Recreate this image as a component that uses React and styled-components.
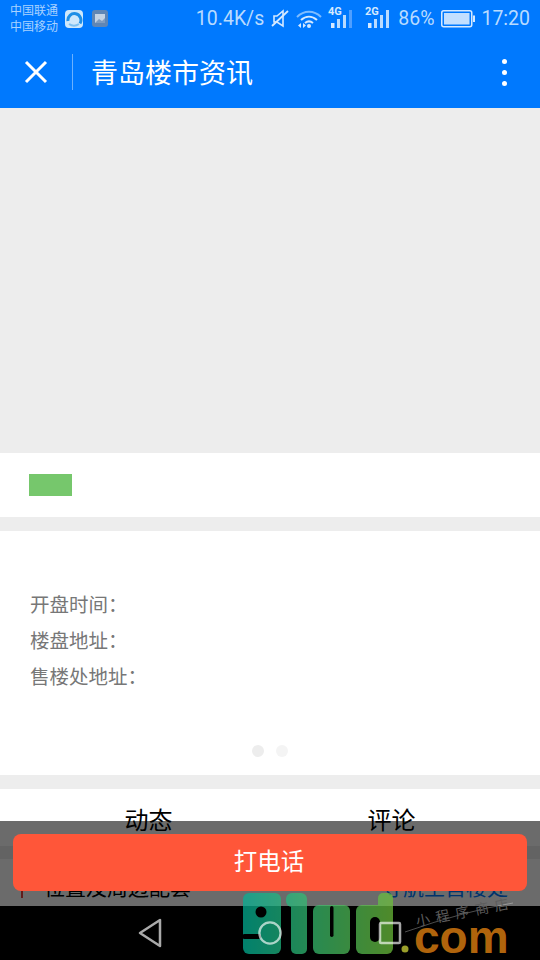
import React from 'react';
import styled, { createGlobalStyle } from 'styled-components';

const GlobalStyle = createGlobalStyle`
  html, body {
    margin: 0;
    padding: 0;
    background: #000;
  }
  * {
    box-sizing: border-box;
  }
`;

const cjk = `"Noto Sans CJK SC", "Noto Sans", sans-serif`;

const Screen = styled.div`
  position: relative;
  display: flex;
  flex-direction: column;
  width: 540px;
  height: 960px;
  overflow: hidden;
  background: #ededed;
  font-family: ${cjk};
`;

const Header = styled.header`
  flex: none;
  height: 108px;
  background: #0079fe;
  color: #fff;
`;

const StatusBar = styled.div`
  display: flex;
  align-items: center;
  justify-content: space-between;
  height: 37px;
  padding: 0 10px;
  color: #b9dbff;
  font-family: Roboto, ${cjk};
`;

const StatusGroup = styled.div`
  display: flex;
  align-items: center;
`;

const Carriers = styled.div`
  width: 55px;
  font-size: 12px;
  line-height: 16px;
  color: #a9d2ff;
`;

const AppTile = styled.svg`
  display: block;
  margin-right: ${(props) => props.$gap || 0}px;
`;

const StatusText = styled.span`
  font-size: 19.5px;
  line-height: 37px;
  margin-right: ${(props) => props.$gap || 0}px;
  white-space: nowrap;
`;

const StatusIcon = styled.svg`
  display: block;
  margin-right: ${(props) => props.$gap || 0}px;
`;

const AppBar = styled.div`
  display: flex;
  align-items: center;
  height: 71px;
  padding: 0 24px 1px;
`;

const CloseIcon = styled.svg`
  display: block;
  margin-right: 24px;
`;

const Divider = styled.div`
  width: 1px;
  height: 36px;
  margin-right: 18px;
  background: rgba(255, 255, 255, 0.42);
`;

const Title = styled.h1`
  flex: 1;
  margin: 0;
  font-size: 27px;
  font-weight: 400;
  line-height: 36px;
  color: #fff;
`;

const MoreButton = styled.div`
  display: flex;
  flex-direction: column;
  gap: 6px;
  margin-right: 9px;
`;

const MoreDot = styled.span`
  width: 5px;
  height: 5px;
  border-radius: 50%;
  background: #fff;
`;

const Main = styled.main`
  position: relative;
  flex: 1;
  display: flex;
  flex-direction: column;
  gap: 14px;
  overflow: hidden;
`;

const Banner = styled.div`
  flex: none;
  height: 345px;
  margin-bottom: -14px;
  background: #ededed;
`;

const TagSection = styled.section`
  flex: none;
  height: 64px;
  padding: 21px 29px;
  background: #fff;
`;

const GreenTag = styled.div`
  width: 43px;
  height: 22px;
  background: #76c76c;
`;

const Swiper = styled.section`
  flex: none;
  display: flex;
  flex-direction: column;
  height: 244px;
  padding: 55px 30px 18px;
  background: #fff;
`;

const InfoLine = styled.div`
  font-size: 19.5px;
  line-height: 36px;
  color: #777;
`;

const Dots = styled.div`
  display: flex;
  justify-content: center;
  gap: 12px;
  margin-top: auto;
`;

const Dot = styled.span`
  width: 12px;
  height: 12px;
  border-radius: 50%;
  background: ${(props) => (props.$active ? '#ededed' : '#f4f4f4')};
`;

const Tabs = styled.div`
  flex: none;
  display: grid;
  grid-template-columns: 243px 243px;
  height: 57px;
  padding: 12px 27px 0;
  background: #fff;
`;

const Tab = styled.div`
  font-size: 24px;
  line-height: 36px;
  text-align: center;
  color: #000;
`;

const LocationRow = styled.div`
  flex: none;
  display: flex;
  align-items: center;
  justify-content: space-between;
  height: 50px;
  margin-top: -1px;
  padding: 4px 32px 0 21px;
  background: #fff;
`;

const LocationTitle = styled.div`
  display: flex;
  align-items: center;
  font-size: 21px;
  line-height: 28px;
  color: #000;

  &::before {
    content: '';
    width: 2px;
    height: 24px;
    margin-right: 21px;
    background: #e64340;
  }
`;

const LocationLink = styled.div`
  font-size: 21px;
  line-height: 28px;
  color: #007aff;
`;

const CallBar = styled.div`
  position: absolute;
  left: 0;
  right: 0;
  bottom: 0;
  height: 85px;
  padding: 13px 13px 15px;
  background: rgba(0, 0, 0, 0.58);
`;

const CallButton = styled.button`
  display: block;
  width: 100%;
  height: 57px;
  padding: 0 2px 4px 0;
  border: none;
  border-radius: 8px;
  background: #ff5639;
  color: #fff;
  font-family: ${cjk};
  font-size: 23.5px;
  line-height: 53px;
`;

const NavBar = styled.nav`
  position: relative;
  z-index: 1;
  flex: none;
  display: flex;
  align-items: center;
  justify-content: center;
  gap: 96px;
  height: 54px;
  background: #000;
`;

const NavIcon = styled.svg`
  position: relative;
  z-index: 1;
  display: block;
`;

const Watermark = styled.div`
  position: absolute;
  left: 240px;
  top: -13px;
  width: 300px;
  height: 67px;
`;

const LogoMark = styled.svg`
  position: absolute;
  left: 0;
  top: 0;
  display: block;
`;

const LogoCom = styled.span`
  position: absolute;
  left: 174px;
  top: 21px;
  font-family: "Liberation Sans", Arial, sans-serif;
  font-size: 46px;
  font-weight: 700;
  line-height: 46px;
  color: #b0640c;
`;

const LogoSlogan = styled.span`
  position: absolute;
  left: 175px;
  top: 10px;
  font-size: 14px;
  line-height: 16px;
  letter-spacing: 6px;
  white-space: nowrap;
  color: #5c5c5c;
  transform: rotate(-11deg);
`;

function SignalIcon({ label, faded, gap }) {
  return (
    <StatusIcon $gap={gap} width="25" height="30" viewBox="0 -3 25 30">
      <text x="0" y="7.500" fontFamily="Roboto, sans-serif" fontSize="11" fontWeight="700" fill="#d5e9ff">
        {label}
      </text>
      <rect x="3" y="16" width="3.500" height="5" fill="#d5e9ff" />
      <rect x="9" y="12" width="3" height="9" fill="#b9dbff" />
      <rect x="15" y="8" width="3" height="13" fill="#b9dbff" />
      <rect x="21" y="3" width="3" height="18" fill={faded ? '#4f9fff' : '#b9dbff'} />
    </StatusIcon>
  );
}

export default function App() {
  return (
    <Screen>
      <GlobalStyle />
      <Header>
        <StatusBar>
          <StatusGroup>
            <Carriers>
              <div>中国联通</div>
              <div>中国移动</div>
            </Carriers>
            <AppTile $gap={9} width="18" height="18" viewBox="0 0 18 18">
              <rect width="18" height="18" rx="4" fill="#cfe8fb" />
              <path d="M3 11a6.500 6.500 0 1 1 12 2.500" fill="none" stroke="#1f8fe6" strokeWidth="3" />
              <path d="M4 14c3 2 7 2 10 0" fill="none" stroke="#7cc0f2" strokeWidth="2" />
            </AppTile>
            <AppTile width="16" height="18" viewBox="0 0 16 18">
              <rect width="16" height="17" rx="3" fill="#5f86b5" />
              <rect x="3" y="4" width="10" height="9" fill="#c4d3e4" />
              <path d="M3 13l4-4 3 2 3-3v5z" fill="#7f9cbf" />
            </AppTile>
          </StatusGroup>
          <StatusGroup>
            <StatusText $gap={7}>10.4K/s</StatusText>
            <StatusIcon $gap={7} width="18" height="20" viewBox="0 0 18 20">
              <path d="M6 7l6-5v15l-6-4H3V7z" fill="none" stroke="#d5e9ff" strokeWidth="1.600" />
              <path d="M1 17L17 2" stroke="#d5e9ff" strokeWidth="1.800" />
            </StatusIcon>
            <StatusIcon $gap={6} width="26" height="20" viewBox="0 0 26 20">
              <path d="M1 8c7-7 17-7 24 0" fill="none" stroke="#7dbcff" strokeWidth="2" />
              <path d="M5 11c5-4.500 11-4.500 16 0" fill="none" stroke="#d5e9ff" strokeWidth="2" />
              <path d="M9 14c2.500-2 5.500-2 8 0" fill="none" stroke="#d5e9ff" strokeWidth="2" />
              <circle cx="13" cy="17" r="2" fill="#d5e9ff" />
              <path d="M5 14v5l-3-2.500zM7 14v5l3-2.500z" fill="#d5e9ff" />
            </StatusIcon>
            <SignalIcon label="4G" faded gap={12} />
            <SignalIcon label="2G" gap={8} />
            <StatusText $gap={7}>86%</StatusText>
            <StatusIcon $gap={6} width="34" height="18" viewBox="0 0 34 18">
              <rect x="0.750" y="0.750" width="30" height="16" rx="2" fill="none" stroke="#d5e9ff" strokeWidth="1.500" />
              <rect x="3" y="3" width="25.500" height="11.500" fill="#c2dfff" />
              <rect x="32" y="5.500" width="2" height="6.500" fill="#d5e9ff" />
            </StatusIcon>
            <StatusText>17:20</StatusText>
          </StatusGroup>
        </StatusBar>
        <AppBar>
          <CloseIcon width="24" height="24" viewBox="0 0 24 24">
            <path d="M2 2l20 20M22 2L2 22" fill="none" stroke="#fff" strokeWidth="3" />
          </CloseIcon>
          <Divider />
          <Title>青岛楼市资讯</Title>
          <MoreButton>
            <MoreDot />
            <MoreDot />
            <MoreDot />
          </MoreButton>
        </AppBar>
      </Header>

      <Main>
        <Banner />
        <TagSection>
          <GreenTag />
        </TagSection>
        <Swiper>
          <InfoLine>开盘时间：</InfoLine>
          <InfoLine>楼盘地址：</InfoLine>
          <InfoLine>售楼处地址：</InfoLine>
          <Dots>
            <Dot $active />
            <Dot />
          </Dots>
        </Swiper>
        <Tabs>
          <Tab>动态</Tab>
          <Tab>评论</Tab>
        </Tabs>
        <LocationRow>
          <LocationTitle>位置及周边配套</LocationTitle>
          <LocationLink>导航至售楼处</LocationLink>
        </LocationRow>
        <CallBar>
          <CallButton>打电话</CallButton>
        </CallBar>
      </Main>

      <NavBar>
        <Watermark>
          <LogoMark width="300" height="67" viewBox="0 0 300 67">
            <defs>
              <linearGradient id="logoFill" gradientUnits="userSpaceOnUse" x1="0" y1="0" x2="153" y2="0">
                <stop offset="0" stopColor="#00b299" />
                <stop offset="0.5" stopColor="#3ac06f" />
                <stop offset="1" stopColor="#6ec03a" />
              </linearGradient>
            </defs>
            <g opacity="0.72">
              <rect x="3" y="0" width="38" height="61" rx="6" fill="url(#logoFill)" />
              <circle cx="21" cy="19" r="5.500" fill="#000" />
              <rect x="2" y="41" width="19" height="5" rx="2.500" fill="#000" />
              <rect x="46" y="0" width="21" height="14" rx="6" fill="url(#logoFill)" />
              <rect x="51" y="6" width="16" height="55" rx="5" fill="url(#logoFill)" />
              <rect x="73" y="12" width="37" height="49" rx="6" fill="url(#logoFill)" />
              <rect x="90" y="13" width="3.500" height="31" rx="1.750" fill="#000" />
              <rect x="116" y="12" width="37" height="49" rx="6" fill="url(#logoFill)" />
              <rect x="138" y="0" width="15" height="30" rx="5" fill="url(#logoFill)" />
              <rect x="130" y="24" width="10" height="25" rx="5" fill="#000" />
            </g>
            <circle cx="165" cy="56" r="3.500" fill="#9a9f2a" />
            <path d="M165 39Q225 18 273 10" fill="none" stroke="rgba(255,255,255,0.3)" strokeWidth="1" />
          </LogoMark>
          <LogoCom>com</LogoCom>
          <LogoSlogan>小程序商店</LogoSlogan>
        </Watermark>
        <NavIcon width="24" height="30" viewBox="0 0 24 30">
          <path d="M22 2v26L2 15z" fill="none" stroke="#aaa" strokeWidth="2.500" strokeLinejoin="round" />
        </NavIcon>
        <NavIcon width="24" height="26" viewBox="0 0 26 26">
          <circle cx="13" cy="13" r="11.500" fill="none" stroke="rgba(255,255,255,0.65)" strokeWidth="2.500" />
        </NavIcon>
        <NavIcon width="24" height="24" viewBox="0 0 24 24">
          <rect x="2" y="2" width="20" height="20" rx="1" fill="none" stroke="rgba(255,255,255,0.65)" strokeWidth="2.500" />
        </NavIcon>
      </NavBar>
    </Screen>
  );
}
